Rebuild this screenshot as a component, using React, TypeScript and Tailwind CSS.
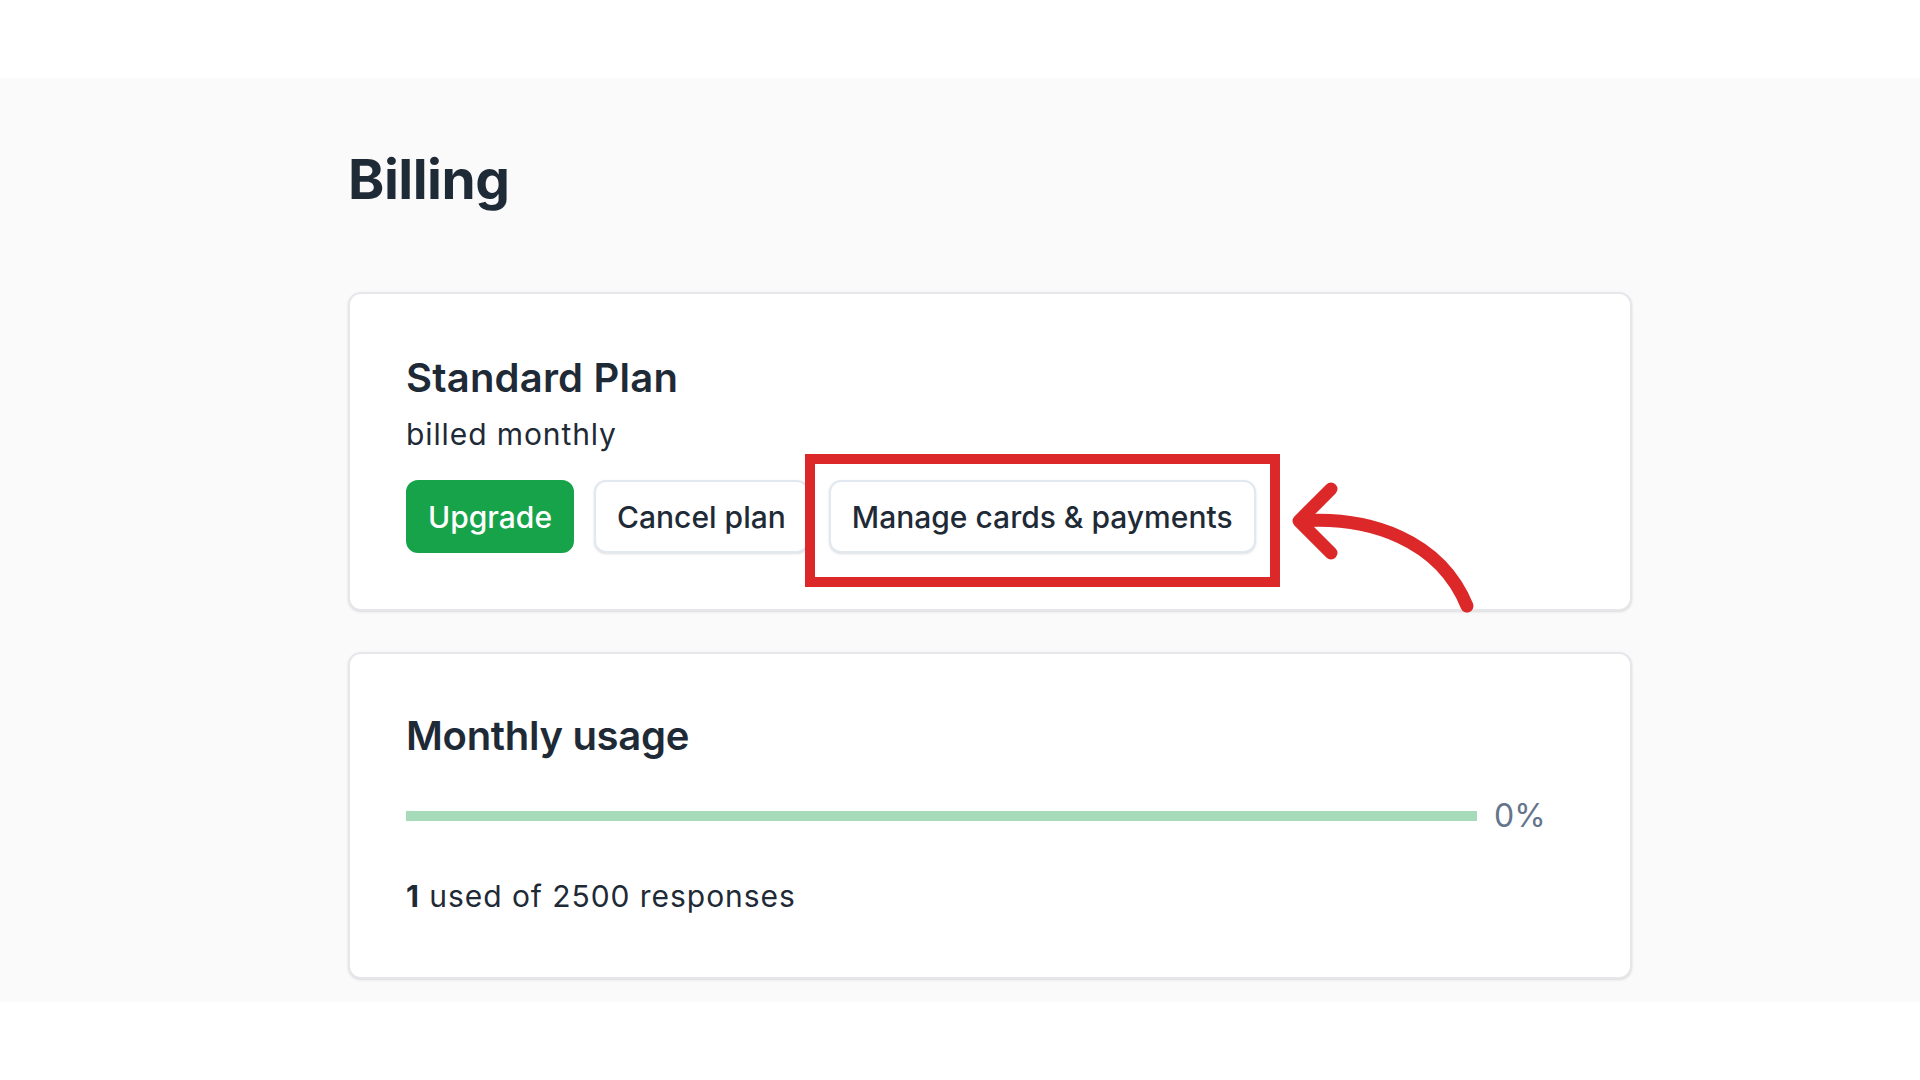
import React from "react";

export default function App() {
  return (
    <div className="relative min-h-[1080px] w-full bg-white font-[Inter,sans-serif] text-[#1f2a37]">
      <div className="h-[78px] bg-white" />
      <main className="bg-[#fafafa] pt-[68px] pb-[23px]">
        <div className="ml-[348px] w-[1284px]">
          <h1 className="text-[55px] leading-[66px] font-bold tracking-[-0.5px]">Billing</h1>

          <section className="mt-[80px] rounded-[13px] border-2 border-[#e5e7eb] bg-white p-[56px] shadow-sm">
            <h2 className="text-[40px] leading-[56px] font-semibold tracking-[0.2px]">Standard Plan</h2>
            <p className="mt-[8px] text-[30px] leading-[40px] font-normal tracking-[0.9px]">billed monthly</p>
            <div className="mt-[26px] flex items-center gap-5">
              <button className="flex h-[73px] items-center rounded-xl border-2 border-[#16a34a] bg-[#16a34a] px-[20px] text-[30px] leading-[40px] font-medium text-white">
                Upgrade
              </button>
              <button className="flex h-[73px] items-center rounded-xl border-2 border-[#e2e8f0] bg-white px-[21px] text-[30px] leading-[40px] font-medium shadow-sm">
                Cancel plan
              </button>
              <button className="flex h-[73px] items-center rounded-xl border-2 border-[#e2e8f0] bg-white px-[21px] text-[30px] leading-[40px] font-medium shadow-sm">
                Manage cards &amp; payments
              </button>
            </div>
          </section>

          <section className="mt-[41px] rounded-[13px] border-2 border-[#e5e7eb] bg-white px-[56px] pt-[56px] pb-[61px] shadow-sm">
            <h2 className="text-[40px] leading-[52px] font-semibold tracking-[-0.3px]">Monthly usage</h2>
            <div className="mt-[34px] flex items-center gap-[17px]">
              <div className="h-[10px] flex-1 bg-[#a5dbb8]" />
              <span className="w-[80px] text-[32px] leading-[40px] font-normal text-[#64748b]">0%</span>
            </div>
            <p className="mt-[40px] text-[30px] leading-[40px] font-normal tracking-[0.95px]">
              <span className="font-bold">1</span> used of 2500 responses
            </p>
          </section>
        </div>
      </main>

      {/* annotation: red highlight box */}
      <div className="pointer-events-none absolute left-[805px] top-[454px] h-[133px] w-[475px] border-[10px] border-[#dc2828]" />

      {/* annotation: curved arrow */}
      <svg
        className="pointer-events-none absolute left-0 top-0"
        width="1920"
        height="1080"
        viewBox="0 0 1920 1080"
        fill="none"
      >
        <path
          d="M1300 521 C1370 516 1440 540 1467 606"
          stroke="#dc2828"
          strokeWidth="13"
          strokeLinecap="round"
          fill="none"
        />
        <path
          d="M1331 489 L1299 521 L1331 553"
          stroke="#dc2828"
          strokeWidth="13"
          strokeLinecap="round"
          strokeLinejoin="round"
          fill="none"
        />
      </svg>
    </div>
  );
}
